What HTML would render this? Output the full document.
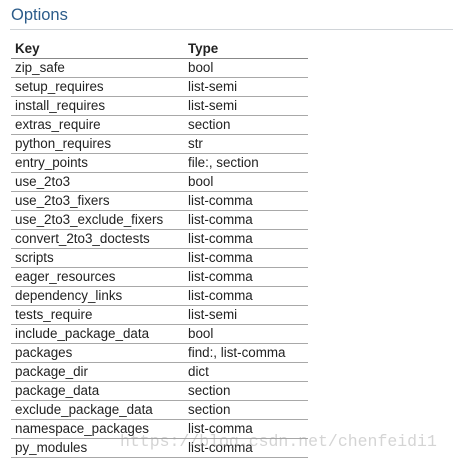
<!DOCTYPE html>
<html><head><style>
body{margin:0;background:#fff;font-family:"Liberation Sans",Arial,sans-serif;width:453px;height:465px;overflow:hidden;position:relative}
h2{position:absolute;left:11px;top:6px;margin:0;font-size:16.5px;font-weight:normal;color:#2c5c8a}
.hr{position:absolute;left:10px;right:0;top:29px;border-top:1px solid #d0d4d8}
table{position:absolute;left:11px;top:40px;border-collapse:collapse;font-size:13.4px;color:#222}
td,th{height:18px;padding:0 0 0 4px;text-align:left;line-height:18px;border-bottom:1px solid #a8a8a8;white-space:nowrap}
th{font-weight:bold;height:17px;border-bottom:1px solid #888}
td:first-child,th:first-child{width:169px}
td:last-child,th:last-child{width:120px}
.wm{position:absolute;left:120px;top:432px;font-family:"Liberation Mono",monospace;font-size:16.5px;color:rgba(160,160,160,0.45)}
</style></head><body>
<h2>Options</h2><div class="hr"></div>
<table>
<tr><th>Key</th><th>Type</th></tr>
<tr><td>zip_safe</td><td>bool</td></tr>
<tr><td>setup_requires</td><td>list-semi</td></tr>
<tr><td>install_requires</td><td>list-semi</td></tr>
<tr><td>extras_require</td><td>section</td></tr>
<tr><td>python_requires</td><td>str</td></tr>
<tr><td>entry_points</td><td>file:, section</td></tr>
<tr><td>use_2to3</td><td>bool</td></tr>
<tr><td>use_2to3_fixers</td><td>list-comma</td></tr>
<tr><td>use_2to3_exclude_fixers</td><td>list-comma</td></tr>
<tr><td>convert_2to3_doctests</td><td>list-comma</td></tr>
<tr><td>scripts</td><td>list-comma</td></tr>
<tr><td>eager_resources</td><td>list-comma</td></tr>
<tr><td>dependency_links</td><td>list-comma</td></tr>
<tr><td>tests_require</td><td>list-semi</td></tr>
<tr><td>include_package_data</td><td>bool</td></tr>
<tr><td>packages</td><td>find:, list-comma</td></tr>
<tr><td>package_dir</td><td>dict</td></tr>
<tr><td>package_data</td><td>section</td></tr>
<tr><td>exclude_package_data</td><td>section</td></tr>
<tr><td>namespace_packages</td><td>list-comma</td></tr>
<tr><td>py_modules</td><td>list-comma</td></tr>
</table>
<div class="wm">https://blog.csdn.net/chenfeidi1</div>
</body></html>
